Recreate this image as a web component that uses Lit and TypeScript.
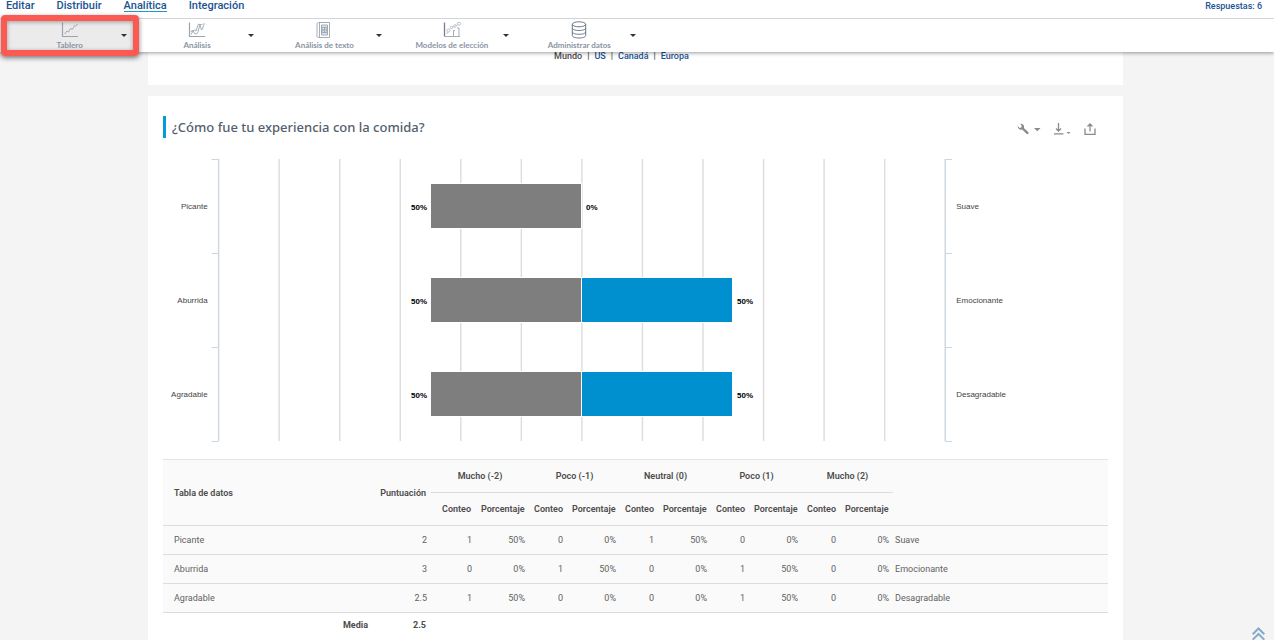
import { LitElement, html, svg, css } from "lit";
import { customElement } from "lit/decorators.js";

const GROUPS = ["Mucho (-2)", "Poco (-1)", "Neutral (0)", "Poco (1)", "Mucho (2)"];

interface Row {
  left: string;
  right: string;
  score: string;
  counts: number[];
  shares: number[];
}

const ROWS: Row[] = [
  { left: "Picante", right: "Suave", score: "2", counts: [1, 0, 1, 0, 0], shares: [50, 0, 50, 0, 0] },
  { left: "Aburrida", right: "Emocionante", score: "3", counts: [0, 1, 0, 1, 0], shares: [0, 50, 0, 50, 0] },
  { left: "Agradable", right: "Desagradable", score: "2.5", counts: [1, 0, 0, 1, 0], shares: [50, 0, 0, 50, 0] },
];

const BARS = [
  { neg: 50, pos: 0 },
  { neg: 50, pos: 50 },
  { neg: 50, pos: 50 },
];

const ICONS = {
  line: svg`<path d="M1.500 1.500v14H17" stroke-width="1.200"/><path d="M3.500 13 6 10l1.500 1L9.500 7.500l2 .800L13.500 4.500l1 .700L16.500 3"/>`,
  multi: svg`<path d="M1.500 1.500v14H17" stroke-width="1.200"/><path d="M3 13.500 5 10l1.500-1 1.500 1 1-3 1.500-4 1.500 1 1.500 5 1-1 1-3.500 1-2"/><path d="M3 11l1.500-2 2 3.500 2 .500 1.500-2 1-4 1.500-4 1 1L15 2.500"/>`,
  book: svg`<path d="M2 3.500C2 2 3 1.500 4 1.500h10.500v15H4c-1.500 0-2-.500-2-1.500zM4.500 1.500v15"/><path d="M6.500 4h6v10h-6z" fill="#dfe3e8"/><path d="M7 6.500h5v5H7zM9.500 6.500v5M7 9h5"/>`,
  model: svg`<path d="M1.500 1.500v14" stroke-width="1.300" stroke="#74808e"/><path d="M1.500 15.500H17M10.500 15V9.500h1.500M16 15V7h-2"/><g stroke="#b4bcc6"><circle cx="5.500" cy="9.500" r="1.500"/><circle cx="8.500" cy="6.500" r="1.300"/><circle cx="12" cy="5" r="1.300"/><circle cx="16" cy="2.800" r="1.500"/><path d="M3.500 13 5 11M9.700 6l1-.500M13.200 4.500l1.500-1"/></g>`,
  data: svg`<g stroke="#5e6b79"><ellipse cx="9" cy="3.300" rx="6.700" ry="2.500"/><path d="M2.300 3.300v11.200c0 1.500 3 2.500 6.700 2.500s6.700-1 6.700-2.500V3.300M2.300 7c0 1.500 3 2.500 6.700 2.500s6.700-1 6.700-2.500M2.300 10.800c0 1.500 3 2.500 6.700 2.500s6.700-1 6.700-2.500"/></g>`,
};

const TOOLS = [
  { label: "Tablero", icon: ICONS.line },
  { label: "Análisis", icon: ICONS.multi },
  { label: "Análisis de texto", icon: ICONS.book },
  { label: "Modelos de elección", icon: ICONS.model },
  { label: "Administrar datos", icon: ICONS.data },
];

@customElement("top-bar")
class TopBar extends LitElement {
  static styles = css`
    :host { display: block; position: relative; z-index: 1; background: #fff; box-shadow: 0 1px 4px rgba(0, 0, 0, 0.4); }
    nav { display: flex; align-items: flex-start; height: 18px; padding: 0 12px 0 6px; gap: 22px; border-bottom: 1px solid #d5d5d5; }
    a { color: #1b5392; text-decoration: none; font-weight: 500; font-size: 11px; line-height: 11px; }
    a.current { border-bottom: 1px solid #1b9bc9; }
    a.responses { margin-left: auto; font-size: 9px; line-height: 12px; }
    .tools { display: grid; grid-template-columns: repeat(5, 10vw); height: 33px; padding-left: 6px; }
    .tool { display: grid; grid-template-columns: 1fr; position: relative; }
    .tool.active { background: #ebebeb; }
    button { border: 0; margin: 0; padding: 0; background: none; font: inherit; color: #8a94a2; cursor: pointer; }
    .main { display: flex; flex-direction: column; align-items: center; padding-top: 2px; font: 700 8px/10px Lato, sans-serif; }
    .main svg { width: 18px; height: 18px; margin-bottom: 1px; fill: none; stroke: #9aa4b0; stroke-width: 0.9; }
    .more { position: absolute; right: 6px; top: 10px; width: 7px; height: 12px; display: flex; align-items: center; justify-content: center; }
    .more::before { content: ""; border: 3px solid transparent; border-top-color: #333; border-bottom: 0; }
    .mark { position: absolute; z-index: 2; inset: -4px -6px -4px -5px; border: 6px solid #fb5a52; border-radius: 4px; box-shadow: 0 2px 5px rgba(0, 0, 0, 0.5), inset 0 1px 4px rgba(0, 0, 0, 0.35); pointer-events: none; }
  `;

  render() {
    return html`
      <nav>
        <a href="#editar">Editar</a>
        <a href="#distribuir">Distribuir</a>
        <a class="current" href="#analitica">Analítica</a>
        <a href="#integracion">Integración</a>
        <a class="responses" href="#respuestas">Respuestas: 6</a>
      </nav>
      <div class="tools">
        ${TOOLS.map(
          (t, i) => html`<div class="tool ${i === 0 ? "active" : ""}">
            <button class="main"><svg viewBox="0 0 18 18" aria-hidden="true">${t.icon}</svg>${t.label}</button>
            <button class="more" aria-label="Más opciones de ${t.label}"></button>
            ${i === 0 ? html`<div class="mark"></div>` : ""}
          </div>`
        )}
      </div>
    `;
  }
}

@customElement("polarity-chart")
class PolarityChart extends LitElement {
  static styles = css`
    :host { display: block; }
    svg { display: block; width: 100%; height: auto; }
    text { font-family: "Liberation Sans", Arial, sans-serif; font-size: 8px; fill: #444; }
    .value { font-weight: 700; fill: #000; }
    .end { text-anchor: end; }
    .grid { stroke: #dcdcdc; stroke-width: 1.4; }
    .axis { stroke: #ccd6e0; stroke-width: 1.4; fill: none; }
    .tick { stroke: #ccd6e0; }
    .neg { fill: #7e7e7e; stroke: #fff; }
    .pos { fill: #0090d0; stroke: #fff; }
  `;

  render() {
    const x0 = 55.6;
    const step = 60.55;
    const top = 4;
    const rowH = 94;
    const mid = 419;
    const right = x0 + step * 12;
    const bottom = top + rowH * 3;
    const line = (cls: string, x1: number, y1: number, x2: number, y2: number) =>
      svg`<line class=${cls} x1=${x1} y1=${y1} x2=${x2} y2=${y2} />`;
    return html`<svg viewBox="0 0 945 304" role="img" aria-label="Resultados por par de adjetivos">
      ${Array.from({ length: 11 }, (_, i) => line("grid", x0 + step * (i + 1), top, x0 + step * (i + 1), bottom))}
      ${line("axis", x0, top, x0, bottom)} ${line("axis", right, top, right, bottom)}
      ${[0, 1, 2, 3].map((i) => {
        const y = top + rowH * i + 0.5;
        return svg`${line("tick", x0 - 7, y, x0, y)}${line("tick", right, y, right + 7, y)}`;
      })}
      ${BARS.map((b, i) => {
        const y = top + rowH * i + 24.5;
        const base = y + 26.5;
        const neg = b.neg * 3.02;
        const pos = b.pos * 3.02;
        return svg`
          <rect class="neg" x=${mid - neg - 0.5} y=${y} width=${neg} height="45" />
          ${pos ? svg`<rect class="pos" x=${mid - 0.5} y=${y} width=${pos} height="45" />` : ""}
          <text class="value end" x=${mid - neg - 4} y=${base}>${b.neg}%</text>
          <text class="value" x=${mid + pos + 4} y=${base}>${b.pos}%</text>
          <text class="end" x=${x0 - 11} y=${base - 1}>${ROWS[i].left}</text>
          <text x=${right + 11} y=${base - 1}>${ROWS[i].right}</text>`;
      })}
    </svg>`;
  }
}

@customElement("data-table")
class DataTable extends LitElement {
  static styles = css`
    :host { display: block; font-size: 9px; line-height: 12px; color: #4c4c4c; }
    table { width: 100%; table-layout: fixed; border-collapse: separate; border-spacing: 0; }
    .c-name { width: 210px; }
    .c-score { width: 58px; }
    .c-first { width: 45px; }
    .c-count { width: 38px; }
    .c-share { width: 53px; }
    th, td { box-sizing: border-box; height: 29px; padding: 0 4px 0 2px; text-align: right; border-bottom: 1px solid #dcdcdc; background: #fafafa; }
    td { color: #626262; }
    thead th { height: 33px; padding: 0 5px; font-weight: 600; }
    thead tr:first-child th { border-top: 1px solid #e4e4e4; }
    thead th.group { text-align: center; height: 34px; }
    th.name, td.name { text-align: left; padding-left: 11px; font-weight: 400; color: #626262; }
    thead th.name { font-weight: 600; color: #4c4c4c; }
    td.opposite { text-align: left; }
    tfoot td { height: 24px; border: 0; background: none; font-weight: 700; color: #4c4c4c; padding: 0 5px; }
  `;

  render() {
    return html`<table>
      <colgroup>
        <col class="c-name" /><col class="c-score" />
        ${GROUPS.map((_, i) => html`<col class=${i === 0 ? "c-first" : "c-count"} /><col class="c-share" />`)}
        <col />
      </colgroup>
      <thead>
        <tr>
          <th class="name" rowspan="2">Tabla de datos</th>
          <th rowspan="2">Puntuación</th>
          ${GROUPS.map((g) => html`<th class="group" colspan="2">${g}</th>`)}
          <th rowspan="2"></th>
        </tr>
        <tr>${GROUPS.map(() => html`<th>Conteo</th><th>Porcentaje</th>`)}</tr>
      </thead>
      <tbody>
        ${ROWS.map(
          (r) => html`<tr>
            <th class="name" scope="row">${r.left}</th>
            <td>${r.score}</td>
            ${r.counts.map((c, i) => html`<td>${c}</td><td>${r.shares[i]}%</td>`)}
            <td class="opposite">${r.right}</td>
          </tr>`
        )}
      </tbody>
      <tfoot>
        <tr><td>Media</td><td>2.5</td><td colspan="11"></td></tr>
      </tfoot>
    </table>`;
  }
}

@customElement("app-root")
class AppRoot extends LitElement {
  static styles = css`
    :host { display: block; height: 100vh; overflow: hidden; background: #f4f4f4; font-family: Roboto, sans-serif; }
    main { display: flex; flex-direction: column; gap: 11px; padding: 0 151px 0 148px; }
    section { background: #fff; padding: 0 15px; }
    .regions { display: flex; justify-content: center; gap: 5px; height: 33px; padding-right: 43px; font-size: 9px; line-height: 8px; font-weight: 500; color: #4c4c4c; }
    .regions a { color: #1b5392; text-decoration: none; }
    .card { padding-bottom: 40px; }
    header { display: flex; align-items: center; justify-content: space-between; padding: 20px 11px 17px 0; }
    h2 { margin: 0; padding-left: 6px; border-left: 3px solid #009dd6; font: 500 13px/22px "Noto Sans", sans-serif; color: #545e6c; }
    .actions { display: flex; align-items: center; gap: 12px; padding-top: 3px; }
    .actions button { display: flex; align-items: center; border: 0; padding: 0; background: none; cursor: pointer; }
    .actions svg { height: 12px; fill: none; stroke: #8a8a8a; stroke-width: 1.3; }
    .solid { fill: #8a8a8a; stroke: none; }
    .top { position: fixed; right: 9px; bottom: 0; line-height: 0; }
    .top svg { width: 13px; height: 13px; fill: none; stroke: #86aac8; stroke-width: 2; }
  `;

  render() {
    return html`
      <top-bar></top-bar>
      <main>
        <section class="regions">
          <span>Mundo</span><span>|</span><a href="#us">US</a><span>|</span><a href="#canada">Canadá</a><span>|</span><a href="#europa">Europa</a>
        </section>
        <section class="card">
          <header>
            <h2>¿Cómo fue tu experiencia con la comida?</h2>
            <div class="actions">
              <button aria-label="Configurar">
                <svg width="24" viewBox="0 0 24 12"><path class="solid" d="M3.200.800a3.200 3.200 0 0 1 3.700 4.100l4.300 4.200c.500.600.500 1.200 0 1.700s-1.200.500-1.700 0L5.200 6.500A3.200 3.200 0 0 1 .800 3.100L2.600 4.900l1.700-.400.400-1.700zM17 5h6.500l-3.200 3.200z"/></svg>
              </button>
              <button aria-label="Descargar">
                <svg width="18" viewBox="0 0 18 12"><path d="M5.500 0v8M3 5.500l2.500 2.500L8 5.500M1 10.800h9.500"/><path class="solid" d="M13.500 9h4l-2 2z"/></svg>
              </button>
              <button aria-label="Compartir">
                <svg width="14" viewBox="0 0 14 12"><path d="M7 8.500V1M4.500 3.500 7 1l2.500 2.500M2 5.500v5.800h10V5.500"/></svg>
              </button>
            </div>
          </header>
          <polarity-chart></polarity-chart>
          <data-table></data-table>
        </section>
      </main>
      <a class="top" href="#inicio" aria-label="Volver arriba"><svg viewBox="0 0 13 13"><path d="M.700 7.200 6.500 1.500l5.800 5.700M.700 12.700 6.500 7l5.800 5.700"/></svg></a>
    `;
  }
}
